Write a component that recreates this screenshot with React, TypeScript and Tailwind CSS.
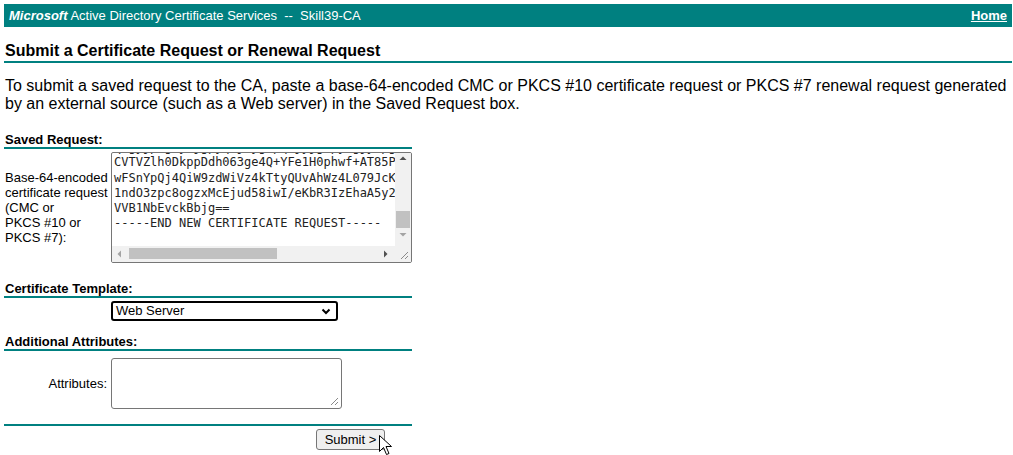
import React from 'react';

const lines = [
  'q4gyjpYgQy/jgpyqhjYyg0pq+jyjgKpy9gjyQpgyjq7yjgpQ',
  'CVTVZlh0DkppDdh063ge4Q+YFe1H0phwf+AT85PkQwbsR1fmYzX0',
  'wFSnYpQj4QiW9zdWiVz4kTtyQUvAhWz4L079JcKq0aXnL5dE2Pk',
  '1ndO3zpc8ogzxMcEjud58iwI/eKbR3IzEhaA5y2Fo8UeNqT6wVb',
  'VVB1NbEvckBbjg==',
  '-----END NEW CERTIFICATE REQUEST-----',
];

const SectionTitle: React.FC<{ children: React.ReactNode; className?: string }> = ({
  children,
  className = '',
}) => (
  <div className={`text-[13px] leading-[14px] font-bold border-b-2 border-[#008080] ${className}`}>
    {children}
  </div>
);

const Grip = () => (
  <svg width="10" height="10" viewBox="0 0 10 10" className="absolute right-[2px] bottom-[2px]">
    <path d="M9 2 L2 9 M9 6 L6 9" stroke="#8a8a8a" strokeWidth="1" />
  </svg>
);

export default function App() {
  return (
    <div className="relative min-h-[455px] bg-white text-black font-['Liberation_Sans',Arial,sans-serif]">
      {/* title bar */}
      <div className="mt-[4px] ml-[4px] mr-[1px] h-[23px] bg-[#008080] text-white text-[13px] leading-[23px] flex justify-between pl-[5px] pr-[5px]">
        <div>
          <i className="font-bold">Microsoft</i> Active Directory Certificate Services &nbsp;--&nbsp; Skill39-CA
        </div>
        <a href="#" className="font-bold underline">
          Home
        </a>
      </div>

      <div className="ml-[4px] mr-[1px]">
        <h2 className="mt-[15px] text-[16px] leading-[18px] font-bold pl-[1px] pb-[1px] border-b-2 border-[#008080]">
          Submit a Certificate Request or Renewal Request
        </h2>
        <p className="mt-[14px] text-[16px] leading-[18px] pl-[1px]">
          To submit a saved request to the CA, paste a base-64-encoded CMC or PKCS #10 certificate request or PKCS #7
          renewal request generated by an external source (such as a Web server) in the Saved Request box.
        </p>
      </div>

      <div className="ml-[4px] w-[408px]">
        <SectionTitle className="mt-[20px] pl-[1px]">Saved Request:</SectionTitle>

        <div className="mt-[3px] flex items-center">
          <div className="w-[107px] pl-[1px] text-[13px] leading-[15px]">
            Base-64-encoded
            <br />
            certificate request
            <br />
            (CMC or
            <br />
            PKCS #10 or
            <br />
            PKCS #7):
          </div>
          <div className="w-[301px] h-[111px] border border-[#767676] rounded-[2px] flex flex-col overflow-hidden">
            <div className="flex h-[93px]">
              <div className="flex-1 overflow-hidden pl-[2px] font-['DejaVu_Sans_Mono','Liberation_Mono',monospace] text-[12px] leading-[15.3px] whitespace-pre text-[#222]">
                <div className="-mt-[13px]">
                  {lines.map((l, i) => (
                    <div key={i}>{l}</div>
                  ))}
                </div>
              </div>
              <svg width="16" height="93" viewBox="0 0 16 93" className="shrink-0">
                <rect width="16" height="93" fill="#f1f1f1" />
                <path d="M4.5 7 L8 3.5 L11.5 7 Z" fill="#505050" />
                <rect x="1" y="58" width="14" height="17" fill="#c1c1c1" />
                <path d="M4.5 80 L11.5 80 L8 83.5 Z" fill="#a3a3a3" />
              </svg>
            </div>
            <div className="flex h-[16px]">
              <svg width="283" height="16" viewBox="0 0 283 16" className="shrink-0">
                <rect width="283" height="16" fill="#f1f1f1" />
                <path d="M9 4.5 L9 11.5 L5.5 8 Z" fill="#a3a3a3" />
                <rect x="17" y="2" width="148" height="11" fill="#c1c1c1" />
                <path d="M272 4.5 L272 11.5 L275.5 8 Z" fill="#505050" />
              </svg>
              <div className="relative w-[16px] h-[16px] bg-[#f1f1f1]">
                <Grip />
              </div>
            </div>
          </div>
        </div>

        <SectionTitle className="mt-[19px] pl-[1px]">Certificate Template:</SectionTitle>
        <div className="mt-[3px] ml-[107px] w-[227px] h-[20px] border-2 border-black rounded-[3px] flex items-center justify-between pl-[3px] pr-[5px] text-[13px]">
          <span>Web Server</span>
          <svg width="10" height="7" viewBox="0 0 10 7">
            <path d="M1.5 1.5 L5 5 L8.5 1.5" stroke="#000" strokeWidth="2" fill="none" />
          </svg>
        </div>

        <SectionTitle className="mt-[14px] pl-[1px]">Additional Attributes:</SectionTitle>
        <div className="mt-[7px] flex items-center">
          <div className="w-[107px] pr-[4px] text-right text-[13px] leading-[15px]">Attributes:</div>
          <div className="relative w-[231px] h-[51px] border border-[#767676] rounded-[3px] bg-white">
            <Grip />
          </div>
        </div>

        <div className="mt-[15px] h-[2px] bg-[#008080]" />
        <div className="mt-[3px] flex">
          <button className="ml-[312px] w-[69px] h-[21px] bg-[#efefef] border border-[#767676] rounded-[3px] text-[13px] leading-[19px] text-black">
            Submit &gt;
          </button>
        </div>
      </div>

      {/* mouse pointer */}
      <svg width="13" height="21" viewBox="0 0 13 21" className="absolute left-[379px] top-[431px]">
        <path
          d="M0.5 0.5 L0.5 16.5 L4.5 12.5 L7.5 19.5 L10 18.5 L7 11.5 L12.5 11.5 Z"
          fill="#fff"
          stroke="#000"
          strokeWidth="1"
          strokeLinejoin="miter"
        />
      </svg>
    </div>
  );
}
